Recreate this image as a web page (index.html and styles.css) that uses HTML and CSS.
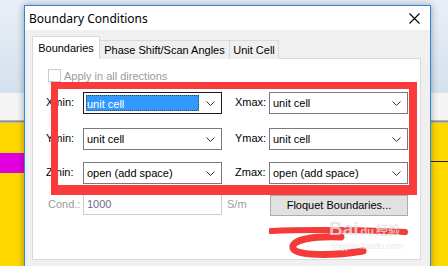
FILE: index.html
```html
<!DOCTYPE html>
<html lang="en">
<head>
    <meta charset="UTF-8">
    <title>Boundary Conditions</title>
    <link rel="stylesheet" href="styles.css">
</head>
<body>

<!-- 背景桌面 -->
<div class="desktop">
    <div class="sky"></div>
    <div class="toolbar"></div>
    <div class="toolbar-line"></div>
    <div class="canvas">
        <div class="canvas-left"><div class="magenta"></div></div>
        <div class="canvas-right"><div class="black-line"></div></div>
    </div>
</div>

<div class="dialog">
    <div class="title-bar">
        <span class="title">Boundary Conditions</span>
        <svg class="close" width="11" height="11" viewBox="0 0 11 11">
            <path d="M0.5 0.5 L10.5 10.5 M10.5 0.5 L0.5 10.5" stroke="#000" stroke-width="1.1" fill="none"/>
        </svg>
    </div>

    <div class="dialog-body">
        <div class="tabs">
            <div class="tab active tab-boundaries">Boundaries</div>
            <div class="tab tab-phase">Phase Shift/Scan Angles</div>
            <div class="tab tab-cell">Unit Cell</div>
        </div>

        <div class="panel">
            <label class="check-row">
                <span class="checkbox"></span>
                <span class="disabled-text">Apply in all directions</span>
            </label>

            <div class="grid">
                <div class="label">Xmin:</div>
                <div class="combo focused"><span class="selected">unit cell</span><svg class="chev" width="9" height="5" viewBox="0 0 9 5"><polyline points="0.5,0.5 4.5,4.5 8.5,0.5" fill="none" stroke="#333"/></svg></div>
                <div class="label">Xmax:</div>
                <div class="combo"><span class="value">unit cell</span><svg class="chev" width="9" height="5" viewBox="0 0 9 5"><polyline points="0.5,0.5 4.5,4.5 8.5,0.5" fill="none" stroke="#333"/></svg></div>

                <div class="label">Ymin:</div>
                <div class="combo"><span class="value">unit cell</span><svg class="chev" width="9" height="5" viewBox="0 0 9 5"><polyline points="0.5,0.5 4.5,4.5 8.5,0.5" fill="none" stroke="#333"/></svg></div>
                <div class="label">Ymax:</div>
                <div class="combo"><span class="value">unit cell</span><svg class="chev" width="9" height="5" viewBox="0 0 9 5"><polyline points="0.5,0.5 4.5,4.5 8.5,0.5" fill="none" stroke="#333"/></svg></div>

                <div class="label">Zmin:</div>
                <div class="combo"><span class="value">open (add space)</span><svg class="chev" width="9" height="5" viewBox="0 0 9 5"><polyline points="0.5,0.5 4.5,4.5 8.5,0.5" fill="none" stroke="#333"/></svg></div>
                <div class="label">Zmax:</div>
                <div class="combo"><span class="value">open (add space)</span><svg class="chev" width="9" height="5" viewBox="0 0 9 5"><polyline points="0.5,0.5 4.5,4.5 8.5,0.5" fill="none" stroke="#333"/></svg></div>

                <div class="label label-disabled">Cond.:</div>
                <div class="textbox">1000</div>
                <div class="unit disabled-text">S/m</div>
                <div class="button">Floquet Boundaries...</div>
            </div>

            <!-- 标注：红框、红线和水印 -->
            <div class="red-box"></div>
            <svg class="scribble" width="160" height="44" viewBox="0 0 160 44">
                <path d="M2 9 C40 7 100 8 136 10" stroke="#f53a3a" stroke-width="6" fill="none" stroke-linecap="round"/>
                <path d="M72 15 C42 14 22 18 24 26 C26 34 64 34 94 29" stroke="#f53a3a" stroke-width="7" fill="none" stroke-linecap="round"/>
            </svg>
            <div class="watermark">
                <div class="wm-logo">Bai<span class="wm-du">du</span><span class="wm-cn">经验</span></div>
                <div class="wm-url">jingyan.baidu.com</div>
            </div>
        </div>
    </div>
</div>

</body>
</html>
```

FILE: styles.css
```css
body {
    margin: 0;
    width: 448px;
    height: 266px;
    overflow: hidden;
    position: relative;
    font-family: "Liberation Sans", Arial, sans-serif;
    font-size: 11px;
}
.desktop {
    display: flex;
    flex-direction: column;
    height: 266px;
}
.sky {
    height: 93px;
    background: linear-gradient(to bottom, #e9eff7, #d5e0ee);
}
.toolbar {
    height: 27px;
    background-color: #f5f5f5;
}
.toolbar-line {
    height: 3px;
    background: linear-gradient(to bottom, #c9c9c9, #8e8e8e, #cfcfcf);
}
.canvas {
    flex: 1;
    display: flex;
    justify-content: space-between;
    background-color: #ffd800;
}
.canvas-left {
    width: 24px;
    padding-top: 30px;
}
.magenta {
    height: 20px;
    background-color: #e000de;
}
.canvas-right {
    width: 17px;
    padding-top: 38px;
}
.black-line {
    height: 1px;
    background-color: #222;
}

/* 对话框窗口 */
.dialog {
    position: absolute;
    left: 24px;
    top: 5px;
    width: 405px;
    height: 270px;
    border: 1px solid #2a8ae0;
    background-color: #f0f0f0;
    box-shadow: 0 0 7px rgba(0, 0, 0, 0.35);
    display: flex;
    flex-direction: column;
}
.title-bar {
    height: 24px;
    background-color: #fff;
    display: flex;
    align-items: center;
    justify-content: space-between;
    padding: 0 10px 0 4px;
}
.title {
    font-family: "Noto Sans", "Open Sans", sans-serif;
    font-size: 12px;
    color: #000;
}
.close {
    display: block;
}
.dialog-body {
    flex: 1;
    padding: 7px 9px 0 7px;
}
.tabs {
    display: flex;
    align-items: flex-end;
    height: 22px;
    position: relative;
    z-index: 1;
}
.tab {
    height: 18px;
    line-height: 18px;
    border: 1px solid #d9d9d9;
    border-bottom: none;
    background-color: #f0f0f0;
    color: #000;
    text-align: center;
    white-space: nowrap;
}
.tab.active {
    height: 22px;
    line-height: 22px;
    background-color: #fff;
}
.tab + .tab {
    border-left: none;
}
.tab-boundaries {
    width: 66px;
}
.tab-phase {
    width: 129px;
}
.tab-cell {
    width: 48px;
}
.panel {
    position: relative;
    height: 200px;
    background-color: #fff;
    border: 1px solid #d9d9d9;
    margin-top: -1px;
}
.check-row {
    display: flex;
    align-items: center;
    gap: 3px;
    margin: 10px 0 0 15px;
    height: 13px;
}
.checkbox {
    width: 11px;
    height: 11px;
    border: 1px solid #cccccc;
    background-color: #fff;
}
.disabled-text {
    color: #9a9a9a;
}
.grid {
    display: grid;
    grid-template-columns: 50px 139px 47px 139px;
    grid-template-rows: 36px 34px 32px 22px;
    align-items: start;
    margin-top: 10px;
}
.label {
    height: 22px;
    line-height: 20px;
    padding-left: 13px;
    color: #000;
}
.label-disabled {
    padding-left: 15px;
    line-height: 21px;
    color: #9a9a9a;
}
.combo {
    height: 20px;
    border: 1px solid #7a7a7a;
    background-color: #fff;
    display: flex;
    align-items: center;
    justify-content: space-between;
    padding: 0 6px 0 2px;
    color: #000;
}
.combo.focused {
    border-color: #1a1a1a;
}
.value {
    padding-left: 1px;
}
.selected {
    flex: 0 0 113px;
    height: 16px;
    line-height: 16px;
    border: 1px dotted #444;
    background-color: #3399ff;
    color: #fff;
    box-sizing: border-box;
}
.chev {
    display: block;
}
.textbox {
    height: 19px;
    line-height: 19px;
    border: 1px solid #cccccc;
    padding-left: 3px;
    color: #6d6d8a;
}
.unit {
    line-height: 21px;
    padding-left: 5px;
}
.button {
    height: 19px;
    line-height: 19px;
    margin-left: 1px;
    margin-top: 1px;
    border: 1px solid #adadad;
    background-color: #e1e1e1;
    text-align: center;
    color: #000;
}

/* 标注层 */
.red-box {
    position: absolute;
    left: 18px;
    top: 23px;
    width: 351px;
    height: 96px;
    border-style: solid;
    border-color: #fa3b3b;
    border-width: 7px 8px 10px 7px;
}
.scribble {
    position: absolute;
    left: 236px;
    top: 163px;
}
.watermark {
    position: absolute;
    left: 296px;
    top: 160px;
    color: rgba(225, 225, 225, 0.8);
}
.wm-logo {
    font-family: "Liberation Sans", Arial, sans-serif;
    font-size: 19px;
    font-weight: bold;
    line-height: 20px;
}
.wm-du {
    font-size: 11px;
    margin-left: 2px;
}
.wm-cn {
    font-family: "Noto Sans CJK SC", sans-serif;
    font-size: 12px;
    margin-left: 2px;
}
.wm-url {
    font-size: 9px;
    margin-left: 2px;
}
```
